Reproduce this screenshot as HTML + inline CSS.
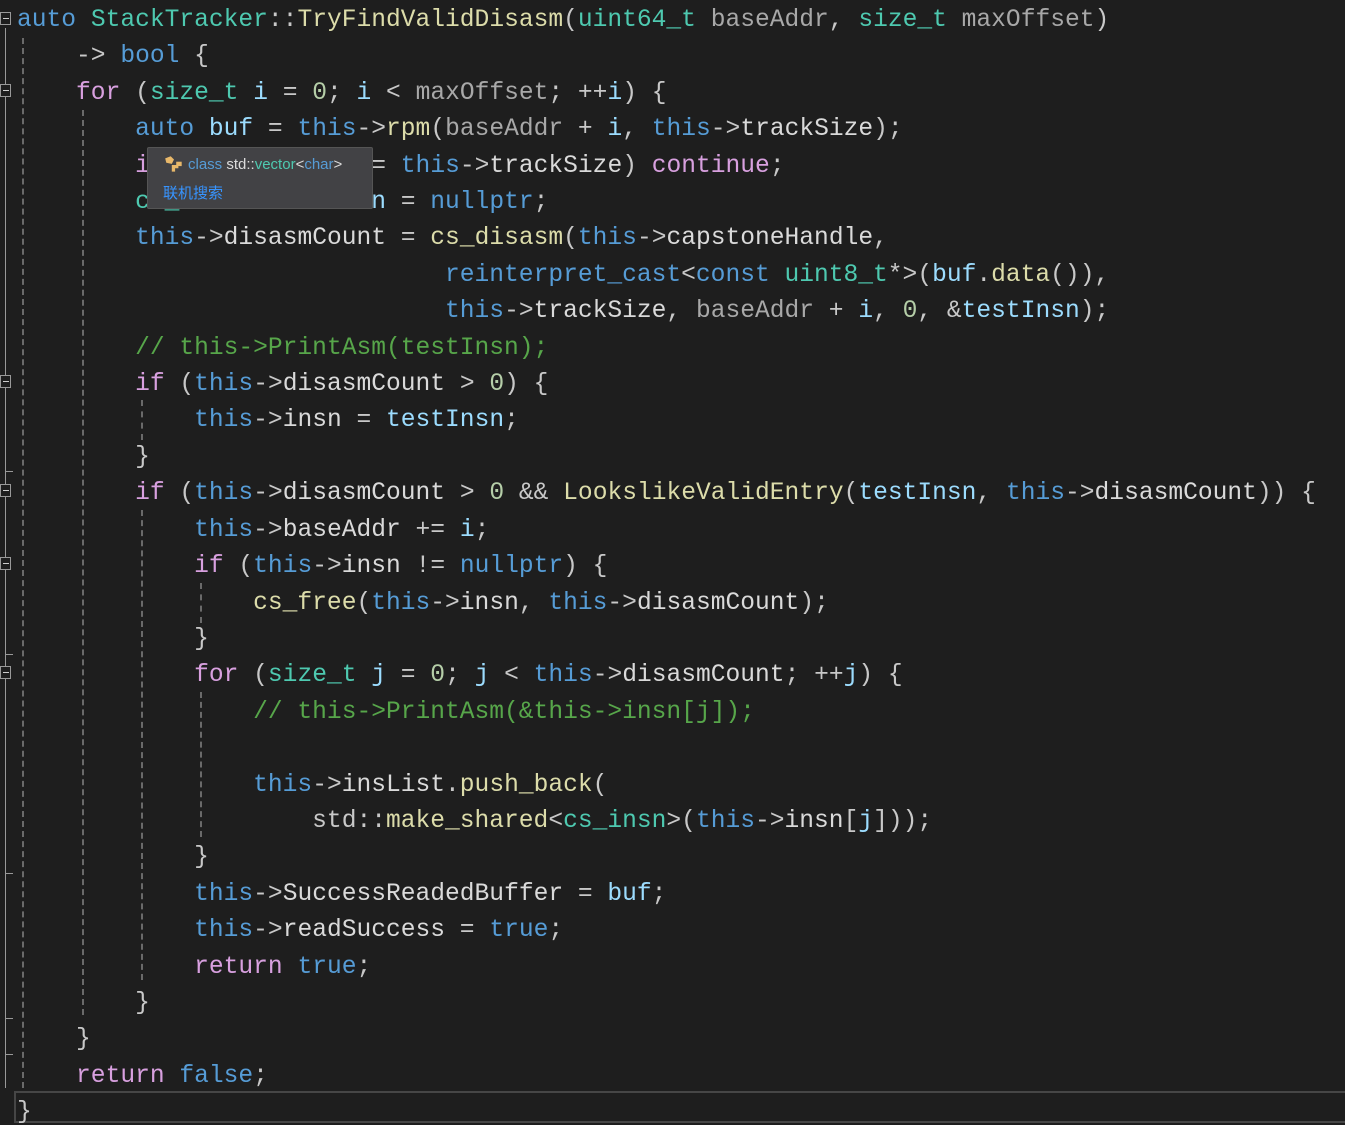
<!DOCTYPE html>
<html><head><meta charset="utf-8"><style>
html,body{margin:0;padding:0;background:#1e1e1e;width:1345px;height:1125px;overflow:hidden;position:relative}
.code{position:absolute;left:17px;top:3px;font-family:"Liberation Mono",monospace;font-size:24.6px;line-height:36.4px;color:#c8c8c8;white-space:pre;letter-spacing:0}
.k{color:#569cd6}.t{color:#4ec9b0}.f{color:#dcdcaa}.c{color:#d8a0df}.v{color:#9cdcfe}.m{color:#57a64a}.n{color:#b5cea8}.p{color:#a8a8a8}.w{color:#dadada}
.g{position:absolute;width:0;border-left:2px dashed #6a6a6a}
.fold{position:absolute;left:0;width:9px;height:11px;border:1px solid #999;background:#1e1e1e}
.fold:after{content:"";position:absolute;left:2px;top:5px;width:6px;height:1px;background:#ccc}
.vl{position:absolute;left:5px;width:1px;background:#999}
.tip{position:absolute;left:147px;top:147px;width:224px;height:60px;background:#424245;border:1px solid #555;border-radius:2px;font-family:"Liberation Sans","Noto Sans CJK SC",sans-serif;font-size:15px}
</style></head><body>
<div class="vl" style="top:28px;height:1060px"></div>
<div class="fold" style="top:12px"></div>
<div class="fold" style="top:84px"></div>
<div class="fold" style="top:375px"></div>
<div class="fold" style="top:484px"></div>
<div class="fold" style="top:557px"></div>
<div class="fold" style="top:666px"></div>
<div style="position:absolute;left:5px;top:471px;width:8px;height:1px;background:#999"></div>
<div style="position:absolute;left:5px;top:654px;width:8px;height:1px;background:#999"></div>
<div style="position:absolute;left:5px;top:873px;width:8px;height:1px;background:#999"></div>
<div style="position:absolute;left:5px;top:1018px;width:8px;height:1px;background:#999"></div>
<div style="position:absolute;left:5px;top:1054px;width:8px;height:1px;background:#999"></div>
<div class="g" style="left:22px;top:38px;height:1050px"></div>
<div class="g" style="left:82px;top:110px;height:905px"></div>
<div class="g" style="left:141px;top:400px;height:40px"></div>
<div class="g" style="left:141px;top:510px;height:470px"></div>
<div class="g" style="left:200px;top:583px;height:40px"></div>
<div class="g" style="left:200px;top:692px;height:145px"></div>
<div style="position:absolute;left:14px;top:1091px;width:1340px;height:32px;border:2px solid #464646;box-sizing:border-box"></div>
<div class="code"><span class="k">auto</span> <span class="t">StackTracker</span>::<span class="f">TryFindValidDisasm</span>(<span class="t">uint64_t</span> <span class="p">baseAddr</span>, <span class="t">size_t</span> <span class="p">maxOffset</span>)
    -&gt; <span class="k">bool</span> {
    <span class="c">for</span> (<span class="t">size_t</span> <span class="v">i</span> = <span class="n">0</span>; <span class="v">i</span> &lt; <span class="p">maxOffset</span>; ++<span class="v">i</span>) {
        <span class="k">auto</span> <span class="v">buf</span> = <span class="k">this</span>-&gt;<span class="f">rpm</span>(<span class="p">baseAddr</span> + <span class="v">i</span>, <span class="k">this</span>-&gt;<span class="w">trackSize</span>);
        <span class="c">if</span> (<span class="v">buf</span>.<span class="f">size</span>() != <span class="k">this</span>-&gt;<span class="w">trackSize</span>) <span class="c">continue</span>;
        <span class="t">cs_insn</span>* <span class="v">testInsn</span> = <span class="k">nullptr</span>;
        <span class="k">this</span>-&gt;<span class="w">disasmCount</span> = <span class="f">cs_disasm</span>(<span class="k">this</span>-&gt;<span class="w">capstoneHandle</span>,
                             <span class="k">reinterpret_cast</span>&lt;<span class="k">const</span> <span class="t">uint8_t</span>*&gt;(<span class="v">buf</span>.<span class="f">data</span>()),
                             <span class="k">this</span>-&gt;<span class="w">trackSize</span>, <span class="p">baseAddr</span> + <span class="v">i</span>, <span class="n">0</span>, &amp;<span class="v">testInsn</span>);
        <span class="m">// this-&gt;PrintAsm(testInsn);</span>
        <span class="c">if</span> (<span class="k">this</span>-&gt;<span class="w">disasmCount</span> &gt; <span class="n">0</span>) {
            <span class="k">this</span>-&gt;<span class="w">insn</span> = <span class="v">testInsn</span>;
        }
        <span class="c">if</span> (<span class="k">this</span>-&gt;<span class="w">disasmCount</span> &gt; <span class="n">0</span> &amp;&amp; <span class="f">LookslikeValidEntry</span>(<span class="v">testInsn</span>, <span class="k">this</span>-&gt;<span class="w">disasmCount</span>)) {
            <span class="k">this</span>-&gt;<span class="w">baseAddr</span> += <span class="v">i</span>;
            <span class="c">if</span> (<span class="k">this</span>-&gt;<span class="w">insn</span> != <span class="k">nullptr</span>) {
                <span class="f">cs_free</span>(<span class="k">this</span>-&gt;<span class="w">insn</span>, <span class="k">this</span>-&gt;<span class="w">disasmCount</span>);
            }
            <span class="c">for</span> (<span class="t">size_t</span> <span class="v">j</span> = <span class="n">0</span>; <span class="v">j</span> &lt; <span class="k">this</span>-&gt;<span class="w">disasmCount</span>; ++<span class="v">j</span>) {
                <span class="m">// this-&gt;PrintAsm(&amp;this-&gt;insn[j]);</span>

                <span class="k">this</span>-&gt;<span class="w">insList</span>.<span class="f">push_back</span>(
                    std::<span class="f">make_shared</span>&lt;<span class="t">cs_insn</span>&gt;(<span class="k">this</span>-&gt;<span class="w">insn</span>[<span class="v">j</span>]));
            }
            <span class="k">this</span>-&gt;<span class="w">SuccessReadedBuffer</span> = <span class="v">buf</span>;
            <span class="k">this</span>-&gt;<span class="w">readSuccess</span> = <span class="k">true</span>;
            <span class="c">return</span> <span class="k">true</span>;
        }
    }
    <span class="c">return</span> <span class="k">false</span>;
}</div>
<div class="tip">
<svg style="position:absolute;left:15px;top:7px" width="22" height="20" viewBox="0 0 20 18"><path d="M2 3l5-2 3 3-2 4-5-1z" fill="#e8b86a"/><path d="M8 9h6v3h-3v3H8z" fill="#e8b86a"/><path d="M12 6h5v4h-5z" fill="#e8b86a"/></svg>
<div style="position:absolute;left:40px;top:8px;white-space:nowrap"><span style="color:#569cd6">class</span> <span style="color:#dcdcdc">std::</span><span style="color:#4ec9b0">vector</span><span style="color:#dcdcdc">&lt;</span><span style="color:#569cd6">char</span><span style="color:#dcdcdc">&gt;</span></div>
<div style="position:absolute;left:15px;top:34px;color:#3794ff;white-space:nowrap">联机搜索</div>
</div>
</body></html>
